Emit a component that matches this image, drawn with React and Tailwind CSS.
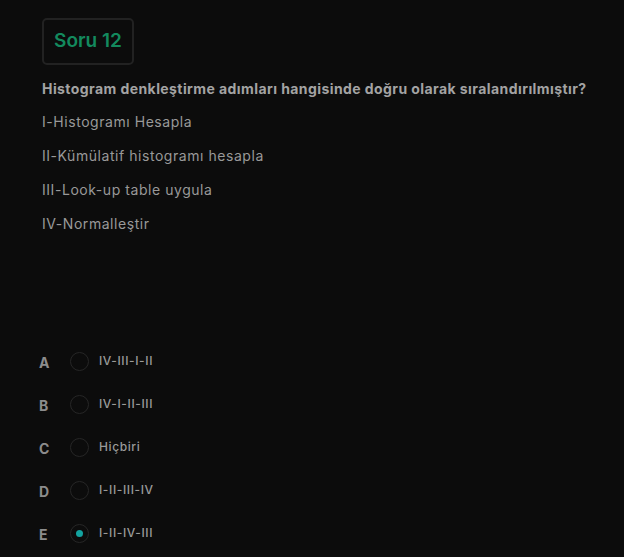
import React, { useState } from 'react';

const steps = ['I-Histogramı Hesapla', 'II-Kümülatif histogramı hesapla', 'III-Look-up table uygula', 'IV-Normalleştir'];

const options = [
  { key: 'A', text: 'IV-III-I-II' },
  { key: 'B', text: 'IV-I-II-III' },
  { key: 'C', text: 'Hiçbiri' },
  { key: 'D', text: 'I-II-III-IV' },
  { key: 'E', text: 'I-II-IV-III' },
];

export default function App() {
  const [selected, setSelected] = useState('E');

  return (
    <div className="min-h-[557px] bg-[#0c0c0c] pl-[42px] pt-[18px] pr-4" style={{ fontFamily: 'Inter, "Noto Sans", sans-serif' }}>
      <div className="inline-flex h-[47px] w-[92px] items-center justify-center rounded-[5px] border-2 border-[#222222]">
        <span className="text-[19px] font-semibold text-[#138a5e]">Soru 12</span>
      </div>

      <p className="mt-[13px] text-[14px] font-bold tracking-[0.42px] text-[#a3a3a3]">
        Histogram denkleştirme adımları hangisinde doğru olarak sıralandırılmıştır?
      </p>

      <div className="mt-[13px] flex flex-col gap-[14px]">
        {steps.map((s) => (
          <p key={s} className="h-[20px] text-[14px] leading-[20px] tracking-[0.55px] text-[#999999]">
            {s}
          </p>
        ))}
      </div>

      <div className="mt-[117px] flex flex-col gap-[23px] pb-2">
        {options.map((o) => (
          <button
            key={o.key}
            onClick={() => setSelected(o.key)}
            className="flex h-[20px] items-center text-left"
          >
            <span className="-ml-[3px] w-[31px] pt-[3px] text-[14px] font-bold text-[#8c8c8c]">{o.key}</span>
            <span className="flex h-[19px] w-[19px] items-center justify-center rounded-full border border-[#262626]">
              {selected === o.key && <span className="h-[7px] w-[7px] rounded-full bg-[#13a3a0]" />}
            </span>
            <span className="ml-[10px] text-[12px] font-medium tracking-[0.6px] text-[#9a9a9a]">{o.text}</span>
          </button>
        ))}
      </div>
    </div>
  );
}
